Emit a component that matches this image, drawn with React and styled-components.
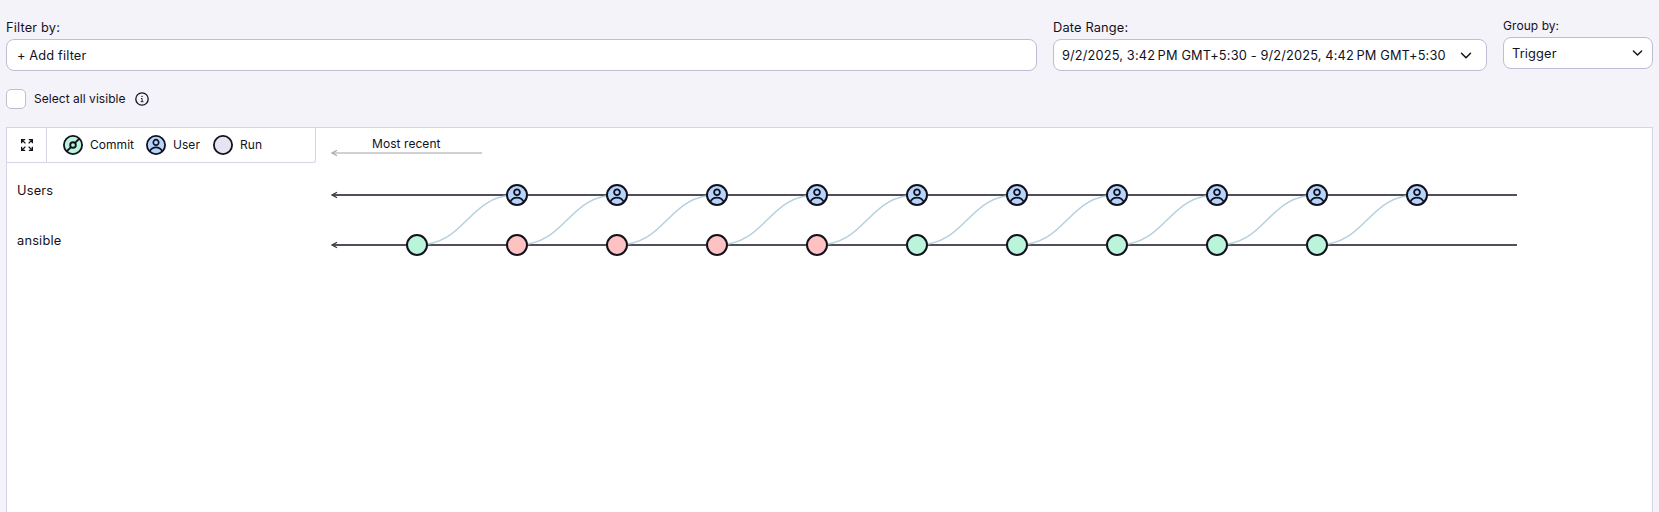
import React from "react";
import styled, { createGlobalStyle } from "styled-components";

const ink = "#12111d";
const edge = "#bfbdd2";
const rule = "#d6d4e6";
const mint = "#baf4db";
const blue = "#b6d5fd";
const pink = "#ffc2c2";

const GlobalStyle = createGlobalStyle`
  * { box-sizing: border-box; }
  body {
    margin: 0;
    background: #f4f3f9;
    color: ${ink};
    font: 400 12.8px/16px Inter, "Liberation Sans", sans-serif;
    letter-spacing: 0.04px;
    overflow: hidden;
  }
  svg { display: block; flex: none; }
`;

const Page = styled.div`
  height: 512px;
  padding: 18px 6px 0;
  display: flex;
  flex-direction: column;
`;

const Toolbar = styled.div`
  display: flex;
  gap: 16px;
  height: 53px;
`;

const Field = styled.div`
  width: ${(p) => p.$width}px;
  flex: none;
  padding-top: ${(p) => (p.$compact ? 0 : 2)}px;
`;

const Label = styled.div`
  height: 19px;
  white-space: nowrap;
  font-size: ${(p) => (p.$small ? 12 : 12.8)}px;
  letter-spacing: ${(p) => (p.$small ? 0.06 : 0.17)}px;
`;

const Box = styled.button`
  width: 100%;
  height: 32px;
  display: flex;
  align-items: center;
  justify-content: space-between;
  padding: 1px ${(p) => p.$right}px 0 ${(p) => p.$left}px;
  background: #fff;
  border: 1px solid ${edge};
  border-radius: 8px;
  color: ${ink};
  font: inherit;
  letter-spacing: 0.15px;
  white-space: nowrap;
`;

const SelectRow = styled.div`
  display: flex;
  align-items: center;
  height: 20px;
  margin: 18px 0;
  font-size: 12px;
`;

const Checkbox = styled.div`
  width: 20px;
  height: 20px;
  margin-right: 8px;
  background: #fff;
  border: 1px solid ${edge};
  border-radius: 5px;
`;

const SelectText = styled.span`
  width: 92px;
  margin-right: 9px;
  white-space: nowrap;
`;

const Canvas = styled.main`
  flex: 1;
  display: grid;
  grid-template-columns: 309px 1fr;
  background: #fff;
  border: 1px solid ${rule};
  border-bottom: 0;
  width: 1647px;
`;

const Legend = styled.div`
  display: flex;
  height: 35px;
  border: solid ${rule};
  border-width: 0 1px 1px 0;
  border-radius: 0 0 3px 0;
  font-size: 12px;
`;

const Expand = styled.div`
  width: 40px;
  display: flex;
  align-items: center;
  justify-content: center;
  border-right: 1px solid ${rule};
`;

const Keys = styled.div`
  display: flex;
  align-items: center;
  gap: 12px;
  padding-left: 16px;
`;

const Key = styled.div`
  display: flex;
  align-items: center;
  gap: 7px;
  width: ${(p) => p.$width}px;
  white-space: nowrap;
`;

const LaneName = styled.div`
  height: 50px;
  padding-left: 10px;
  letter-spacing: 0.2px;
`;

const Lanes = styled.div`
  padding-top: 20px;
`;

function Chevron({ size = 12 }) {
  return (
    <svg width={size} height={size} viewBox="0 0 12 12" fill="none" stroke={ink} strokeWidth="1.5" strokeLinecap="round" strokeLinejoin="round">
      <path d="M1.5 3.2 6 7.7l4.5-4.5" />
    </svg>
  );
}

function Info() {
  return (
    <svg width="14" height="14" viewBox="0 0 14 14" fill="none" stroke={ink}>
      <circle cx="7" cy="7" r="6.2" strokeWidth="1.3" />
      <path d="M6 6.5h1.1v3.2M5.7 9.7h2.8" strokeWidth=".9" />
      <circle cx="7" cy="4.4" r=".7" fill={ink} stroke="none" />
    </svg>
  );
}

function ExpandIcon() {
  return (
    <svg width="12" height="12" viewBox="0 0 12 12" fill="none" stroke={ink} strokeWidth="1.3">
      <path d="M.65 4.2V.65H4.2M.8.8l3.6 3.6M7.8.65h3.55V4.2M11.2.8 7.6 4.4M.65 7.8v3.55H4.2M.8 11.2l3.6-3.6M11.35 7.8v3.55H7.8M11.2 11.2 7.6 7.6" />
    </svg>
  );
}

function UserMark() {
  return (
    <g fill="none" stroke={ink} strokeWidth="1.8">
      <circle cx="0" cy="-2.8" r="2.9" />
      <path d="M-6.9 7.2C-5.4 3.8-3 2.6 0 2.6S5.4 3.8 6.9 7.2" />
    </g>
  );
}

function CommitMark() {
  return (
    <g fill="none" stroke={ink} strokeWidth="2">
      <circle cx="0" cy="0" r="3" />
      <path d="M2.2-2.2 6.8-6.8M-2.2 2.2-6.8 6.8" />
    </g>
  );
}

function KeyIcon({ fill, children }) {
  return (
    <svg width="20" height="20" viewBox="-10 -10 20 20">
      <circle r="9.1" fill={fill} stroke={ink} strokeWidth="1.8" />
      <g transform="scale(.93)">{children}</g>
    </svg>
  );
}

function Arrow({ y, end, stroke, tip }) {
  return (
    <g fill="none">
      <path d={`M17 ${y}H${end}`} stroke={stroke} strokeWidth="2" />
      <path d={`M21 ${y - 2.8} 16 ${y}l5 2.8`} stroke={tip} strokeWidth="1.3" />
    </g>
  );
}

const runs = [mint, pink, pink, pink, pink, mint, mint, mint, mint, mint];

function Timeline() {
  return (
    <svg width="1336" height="384" viewBox="0 0 1336 384">
      <text x="90.3" y="20" textAnchor="middle" fontSize="12" letterSpacing=".05" fill={ink}>Most recent</text>
      <Arrow y={25} end={166} stroke="#d1d1d3" tip="#aaaaad" />
      <Arrow y={67} end={1201} stroke="#514f59" tip="#3a3943" />
      <Arrow y={117} end={1201} stroke="#514f59" tip="#3a3943" />
      {runs.map((_, i) => {
        const x = 101 + i * 100;
        return <path key={i} d={`M${x} 117C${x + 50} 117 ${x + 50} 67 ${x + 100} 67`} fill="none" stroke="#b7d0de" strokeWidth="1.5" />;
      })}
      {runs.map((fill, i) => (
        <React.Fragment key={i}>
          <circle cx={101 + i * 100} cy="117" r="10" fill={fill} stroke={ink} strokeWidth="2" />
          <g transform={`translate(${201 + i * 100} 67)`}>
            <circle r="10" fill={blue} stroke={ink} strokeWidth="2" />
            <UserMark />
          </g>
        </React.Fragment>
      ))}
    </svg>
  );
}

export default function App() {
  return (
    <>
      <GlobalStyle />
      <Page>
        <Toolbar>
          <Field $width={1031}>
            <Label>Filter by:</Label>
            <Box $left={10} $right={10}>+ Add filter</Box>
          </Field>
          <Field $width={434}>
            <Label>Date Range:</Label>
            <Box $left={8} $right={14}>
              <span>9/2/2025, 3:42&#8239;PM GMT+5:30 - 9/2/2025, 4:42&#8239;PM GMT+5:30</span>
              <Chevron />
            </Box>
          </Field>
          <Field $width={150} $compact>
            <Label $small>Group by:</Label>
            <Box $left={8} $right={9}>Trigger<Chevron size={11} /></Box>
          </Field>
        </Toolbar>
        <SelectRow>
          <Checkbox />
          <SelectText>Select all visible</SelectText>
          <Info />
        </SelectRow>
        <Canvas>
          <div>
            <Legend>
              <Expand><ExpandIcon /></Expand>
              <Keys>
                <Key $width={71}><KeyIcon fill={mint}><CommitMark /></KeyIcon>Commit</Key>
                <Key $width={55}><KeyIcon fill={blue}><UserMark /></KeyIcon>User</Key>
                <Key $width={50}><KeyIcon fill="#e5e4f1" />Run</Key>
              </Keys>
            </Legend>
            <Lanes>
              <LaneName>Users</LaneName>
              <LaneName>ansible</LaneName>
            </Lanes>
          </div>
          <Timeline />
        </Canvas>
      </Page>
    </>
  );
}
